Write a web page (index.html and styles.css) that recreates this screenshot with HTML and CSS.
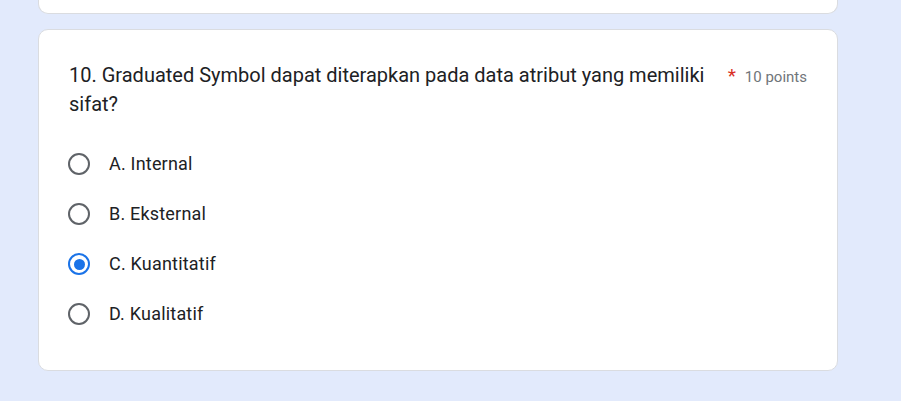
FILE: index.html
```html
<!DOCTYPE html>
<html lang="id">
<head>
<meta charset="utf-8">
<title>Form</title>
<link rel="stylesheet" href="styles.css">
</head>
<body>
<div class="page">
  <div class="card card-prev"></div>
  <div class="card question">
    <div class="q-head">
      <div class="q-title">10. Graduated Symbol dapat diterapkan pada data atribut yang memiliki sifat?</div>
      <div class="q-meta"><span class="req">*</span><span class="points">10 points</span></div>
    </div>
    <div class="options">
      <label class="option"><span class="radio"></span><span class="opt-text">A. Internal</span></label>
      <label class="option"><span class="radio"></span><span class="opt-text">B. Eksternal</span></label>
      <label class="option"><span class="radio checked"></span><span class="opt-text">C. Kuantitatif</span></label>
      <label class="option"><span class="radio"></span><span class="opt-text">D. Kualitatif</span></label>
    </div>
  </div>
</div>
</body>
</html>
```

FILE: styles.css
```css
* { box-sizing: border-box; }
html, body {
  margin: 0;
  padding: 0;
  background: #e2eafc;
  font-family: Roboto, "Liberation Sans", Arial, sans-serif;
  color: #202124;
}
.page {
  width: 800px;
  margin-left: 38px;
  display: flex;
  flex-direction: column;
  gap: 15px;
}
.card {
  background: #fff;
  border: 1px solid #dadce0;
  border-radius: 10px;
}
.card-prev {
  height: 14px;
  border-top: none;
  border-top-left-radius: 0;
  border-top-right-radius: 0;
}
.question {
  padding: 31px 30px 31px 30px;
}
.q-head {
  display: flex;
  align-items: flex-start;
  gap: 12px;
}
.q-title {
  flex: 1;
  font-size: 20px;
  line-height: 29px;
  letter-spacing: 0;
}
.q-meta {
  display: flex;
  align-items: baseline;
  gap: 9px;
  margin-top: 5px;
  white-space: nowrap;
}
.req {
  color: #d93025;
  font-size: 19px;
  line-height: 20px;
}
.points {
  color: #70757a;
  font-size: 15px;
  line-height: 20px;
}
.options {
  margin-top: 20px;
  display: flex;
  flex-direction: column;
}
.option {
  height: 50px;
  display: flex;
  align-items: center;
  gap: 19px;
}
.radio {
  width: 22px;
  height: 22px;
  margin-left: -1px;
  border: 2px solid #5f6368;
  border-radius: 50%;
  display: flex;
  align-items: center;
  justify-content: center;
  flex: none;
}
.radio.checked {
  border-color: #1a73e8;
}
.radio.checked::after {
  content: "";
  width: 11px;
  height: 11px;
  border-radius: 50%;
  background: #1a73e8;
}
.opt-text {
  font-size: 18px;
  line-height: 24px;
  letter-spacing: 0.2px;
}
```
